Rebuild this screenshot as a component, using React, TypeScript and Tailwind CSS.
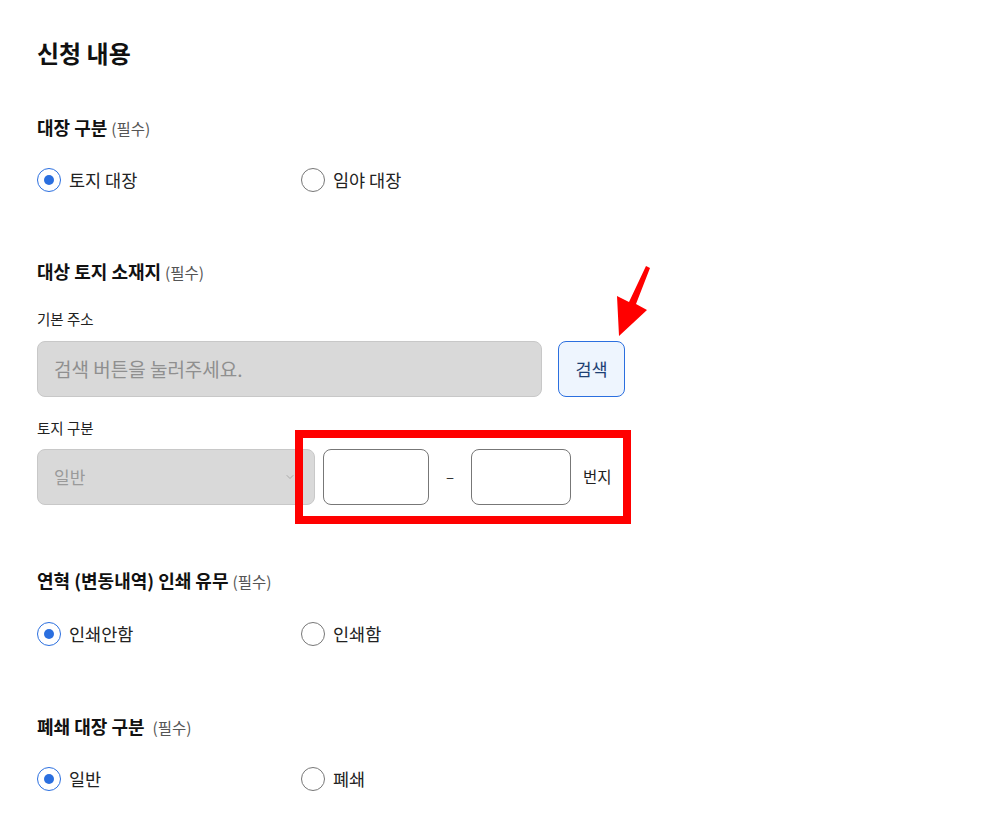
import { ChevronDown } from "lucide-react";

const font = { fontFamily: '"Noto Sans CJK KR", "Noto Sans", sans-serif' };

function Heading({ title, gap }: { title: string; gap?: boolean }) {
  return (
    <h2 className="flex h-6 items-baseline text-[18px] leading-6 font-bold text-[#111]">
      {title}
      <span className={`${gap ? "ml-2" : "ml-1"} text-[15.5px] leading-6 font-normal text-[#555]`}>(필수)</span>
    </h2>
  );
}

function Radio({ label, checked }: { label: string; checked?: boolean }) {
  return (
    <label className="flex h-6 w-[264px] items-center gap-2 text-[17.5px] leading-6 text-[#222]">
      <span
        className={`flex h-6 w-6 items-center justify-center rounded-full border-[1.5px] ${
          checked ? "border-[#2b6fdf]" : "border-[#777]"
        }`}
      >
        {checked && <span className="h-[10px] w-[10px] rounded-full bg-[#2b6fdf]" />}
      </span>
      {label}
    </label>
  );
}

export default function App() {
  return (
    <div style={font} className="relative min-h-[825px] bg-white px-[37px] pt-[37px]">
      <h1 className="h-8 text-[24px] leading-8 font-bold text-[#111]">신청 내용</h1>

      <section className="mt-[46px]">
        <Heading title="대장 구분" />
        <div className="mt-[29px] flex">
          <Radio label="토지 대장" checked />
          <Radio label="임야 대장" />
        </div>
      </section>

      <section className="mt-[67px]">
        <Heading title="대상 토지 소재지" />
        <p className="mt-[26px] h-5 text-[14.5px] leading-5 text-[#222]">기본 주소</p>
        <div className="mt-3 flex gap-4">
          <div className="flex h-14 w-[505px] items-center rounded-lg border border-[#c8c8c8] bg-[#d9d9d9] px-4 text-[19px] text-[#8f8f8f]">
            검색 버튼을 눌러주세요.
          </div>
          <button
            type="button"
            className="h-14 w-[67px] rounded-lg border border-[#2b6fdf] bg-[#eef5fe] text-[17.5px] text-[#1d3f73]"
          >
            검색
          </button>
        </div>

        <p className="mt-[21px] h-5 text-[14.5px] leading-5 text-[#222]">토지 구분</p>
        <div className="mt-[11px] flex items-center">
          <div className="flex h-14 w-[278px] items-center justify-between rounded-lg border border-[#c8c8c8] bg-[#d9d9d9] pr-[18px] pl-4 text-[17px] text-[#9a9a9a]">
            일반
            <ChevronDown className="h-3 w-3 text-[#999]" strokeWidth={1.5} />
          </div>
          <div className="ml-2 h-14 w-[106px] rounded-lg border border-[#777] bg-white" />
          <span className="w-[42px] text-center text-[15px] text-[#333]">–</span>
          <div className="h-14 w-[100px] rounded-lg border border-[#777] bg-white" />
          <span className="ml-3 text-[15.5px] text-[#222]">번지</span>
        </div>
      </section>

      <section className="mt-[63px]">
        <Heading title="연혁 (변동내역) 인쇄 유무" />
        <div className="mt-[30px] flex">
          <Radio label="인쇄안함" checked />
          <Radio label="인쇄함" />
        </div>
      </section>

      <section className="mt-[68px] pb-8">
        <Heading title="폐쇄 대장 구분" gap />
        <div className="mt-[29px] flex">
          <Radio label="일반" checked />
          <Radio label="폐쇄" />
        </div>
      </section>

      {/* annotation overlay */}
      <div className="pointer-events-none absolute top-[430px] left-[295px] h-[94px] w-[336px] border-[8px] border-[#ff0000]" />
      <svg
        className="pointer-events-none absolute top-[260px] left-[610px]"
        width="45"
        height="80"
        viewBox="0 0 45 80"
      >
        <polygon points="36,6 40,8 26,44 37,50 9,76 7,36 19,42" fill="#ff0000" />
      </svg>
    </div>
  );
}
